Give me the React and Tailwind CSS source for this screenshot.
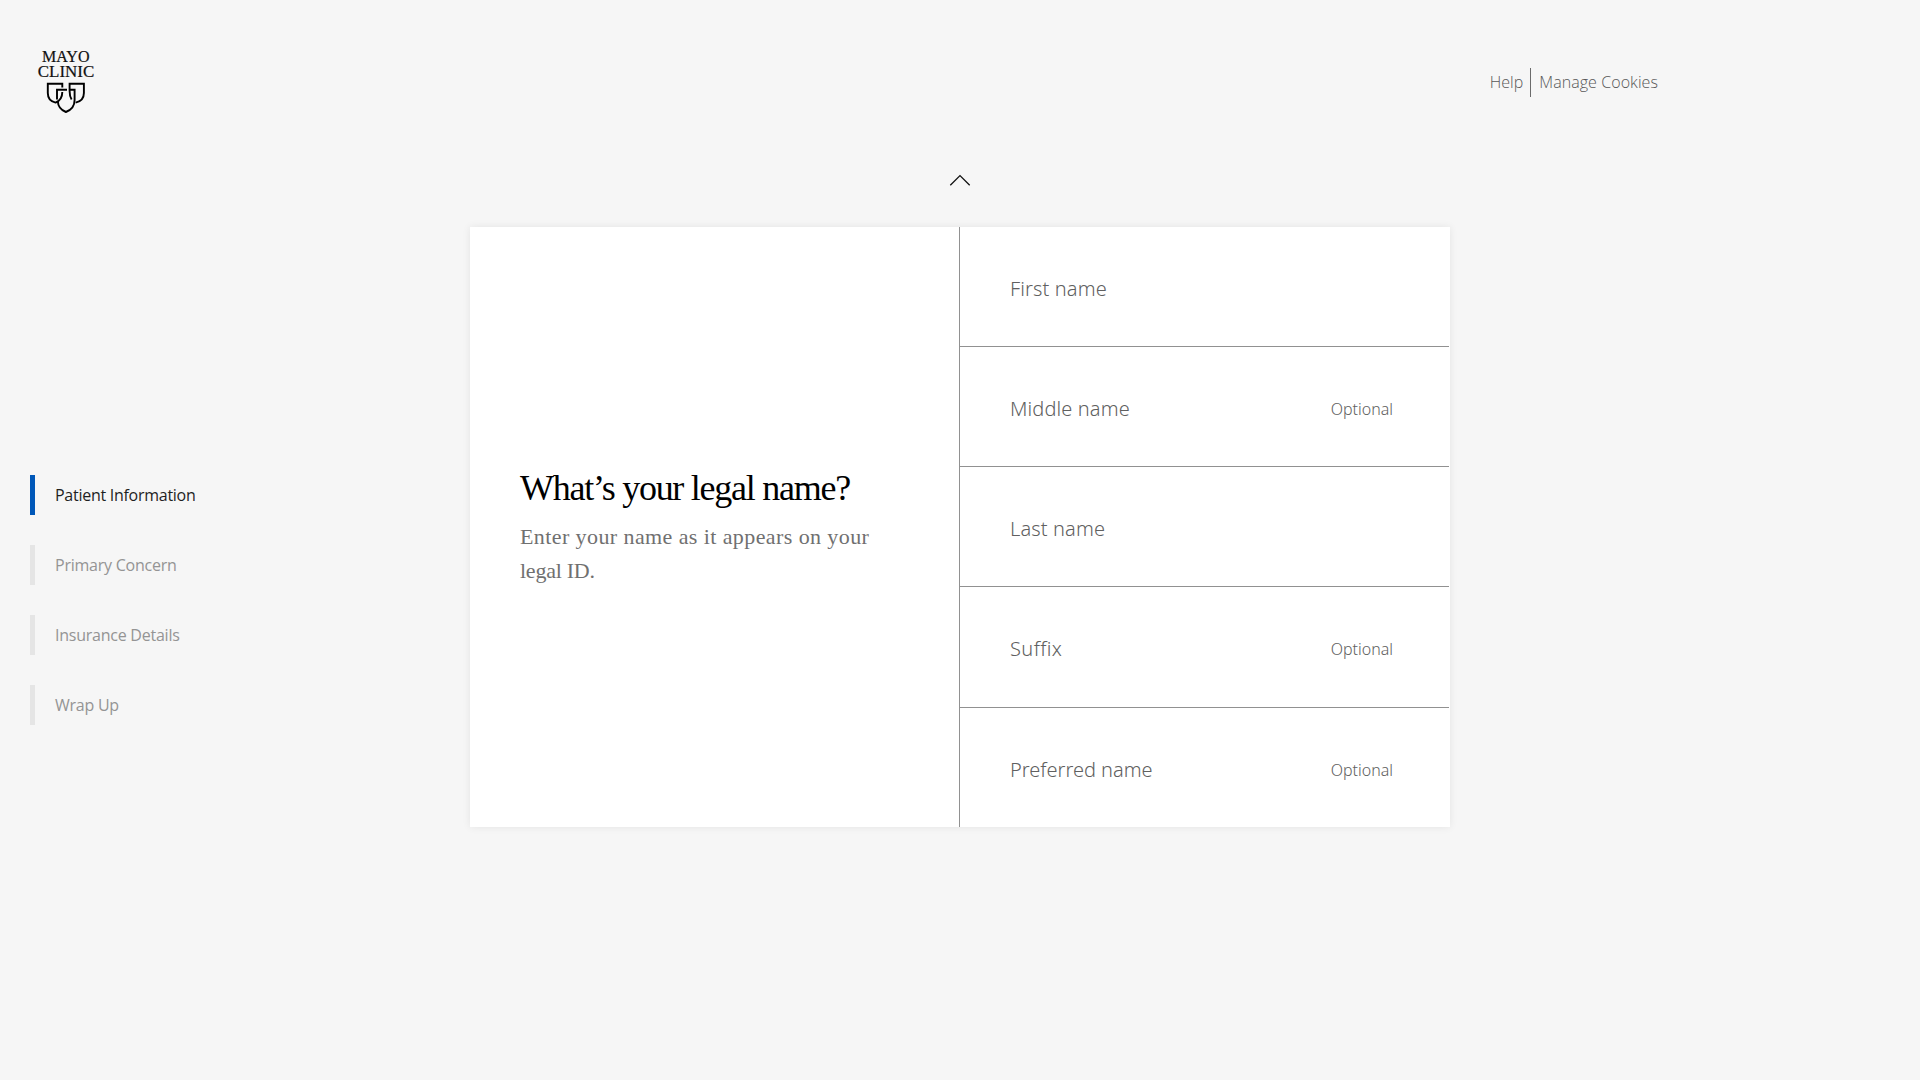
import React from "react";

const STEPS = [
  { label: "Patient Information", active: true },
  { label: "Primary Concern" },
  { label: "Insurance Details" },
  { label: "Wrap Up" },
];

const FIELDS = [
  { label: "First name" },
  { label: "Middle name", optional: true },
  { label: "Last name" },
  { label: "Suffix", optional: true, tracking: "tracking-[0.4px]" },
  { label: "Preferred name", optional: true, tracking: "tracking-normal" },
];

function Logo() {
  return (
    <svg className="h-[66px] w-[60px]" viewBox="36 48 60 66" fill="none" role="img" aria-label="Mayo Clinic">
      <g fill="#111" stroke="#111" strokeWidth="0.2" fontFamily="'Liberation Serif', serif" fontSize="15.8">
        <text x="42" y="61.6" textLength="47.5" lengthAdjust="spacingAndGlyphs">MAYO</text>
        <text x="37.8" y="76.6" textLength="56.4" lengthAdjust="spacingAndGlyphs">CLINIC</text>
      </g>
      <g stroke="#000" strokeWidth="1.9">
        <path d="M62.3 87.4V83.8H47.8V93C47.8 98 51 101.6 55.6 102.6C59.6 101 62.3 97 62.3 92" />
        <path d="M75.6 102.6C80.6 101.6 83.9 98 83.9 93V83.8H69.6V91C69.6 94.6 70.2 97.4 71.6 99.6" />
        <path d="M57 99.5V89.8H67M70 89.8H74.6V100C74.6 106 71.2 110 65.9 112C61 110 58 106 57.8 101.2" />
      </g>
    </svg>
  );
}

export default function App() {
  return (
    <div className="min-h-screen bg-[#f6f6f6] font-['Open_Sans',sans-serif]">
      <header className="flex h-[162px] items-center justify-between pr-[262px] pl-9">
        <Logo />
        <nav className="flex items-center pt-[2px] text-base font-light text-[#585858]">
          <a>Help</a>
          <span className="mr-2 ml-[7px] h-[29px] w-px bg-[#6b6b6b]" />
          <a className="tracking-[0.07px]">Manage Cookies</a>
        </nav>
      </header>

      <div className="flex h-[65px] justify-center pt-3">
        <svg className="h-3 w-[22px]" viewBox="0 0 22 12" fill="none" stroke="#111" strokeWidth="1.3">
          <path d="M1.3 11.3 11 1.6l9.7 9.7" />
        </svg>
      </div>

      <main className="grid grid-cols-[470px_980px]">
        <ul className="flex flex-col gap-[30px] pt-[248px] pl-[30px]">
          {STEPS.map((s) => (
            <li
              key={s.label}
              className={
                s.active
                  ? "flex h-10 items-center border-l-[5px] border-[#0057b8] pl-5 text-base tracking-[-0.27px] text-[#1f1f1f]"
                  : "flex h-10 items-center border-l-[5px] border-[#e5e5e5] pl-5 text-base tracking-[-0.24px] text-[#949494]"
              }
            >
              {s.label}
            </li>
          ))}
        </ul>

        <section className="flex h-[600px] bg-white shadow-[0_0_8px_rgba(0,0,0,0.08)]">
          <div className="flex w-[490px] flex-col justify-center gap-[10px] border-r border-[#919191] pl-[50px] font-['Liberation_Serif',serif]">
            <h1 className="text-[36px] leading-[44px] tracking-[-1.26px] text-black">What’s your legal name?</h1>
            <p className="text-[22px] leading-[34px] tracking-[0.41px] text-[#707070]">
              Enter your name as it appears on your
              <br />
              <span className="tracking-[-0.25px]">legal ID.</span>
            </p>
          </div>
          <div className="mr-px grid flex-1 grid-rows-[120px_120px_120px_121px_119px] divide-y divide-[#919191] font-['Noto_Sans',sans-serif] font-light text-[#606060]">
            {FIELDS.map((f) => (
              <label key={f.label} className="flex items-center justify-between pt-1 pr-[56px] pl-[50px]">
                <span className={`text-xl ${f.tracking || "tracking-[0.12px]"}`}>{f.label}</span>
                {f.optional && <span className="text-base">Optional</span>}
              </label>
            ))}
          </div>
        </section>
      </main>
    </div>
  );
}
